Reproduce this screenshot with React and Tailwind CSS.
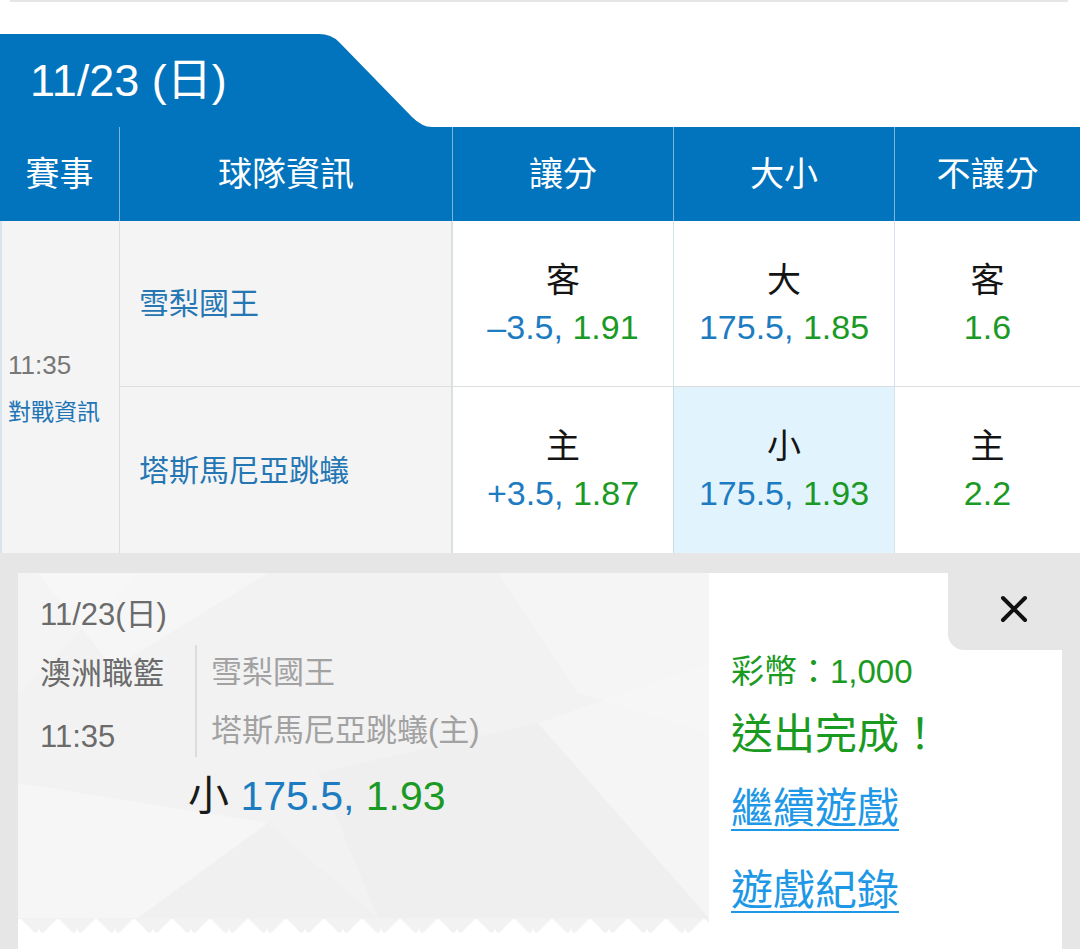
import React from 'react'

const rows = [
  {
    team: '雪梨國王',
    spread: { label: '客', line: '–3.5', odds: '1.91' },
    total: { label: '大', line: '175.5', odds: '1.85' },
    money: { label: '客', odds: '1.6' },
  },
  {
    team: '塔斯馬尼亞跳蟻',
    spread: { label: '主', line: '+3.5', odds: '1.87' },
    total: { label: '小', line: '175.5', odds: '1.93', active: true },
    money: { label: '主', odds: '2.2' },
  },
]

function OddsCell({ label, line, odds, active, last }) {
  return (
    <div
      className={`flex flex-col items-center justify-center border-l ${
        last ? 'w-[186px]' : 'w-[221px]'
      } ${active ? 'bg-[#e1f3fd] border-[#c9d9e6]' : 'bg-white border-[#d6e2ec]'}`}
    >
      <div className="text-[34px] leading-[47px] text-[#141414]">{label}</div>
      <div className="text-[34px] leading-[47px]">
        {line && <span className="text-[#1d7cc1]">{line}, </span>}
        <span className="text-[#1a9a25]">{odds}</span>
      </div>
    </div>
  )
}

function Ticket() {
  return (
    <div className="w-[691px] flex flex-col">
      <div className="relative h-[345px] bg-[#f2f2f2] overflow-hidden">
        {/* faint polygon backdrop */}
        <svg className="absolute inset-0" width="691" height="345" viewBox="0 0 691 345">
          <polygon points="20,0 250,0 95,95" fill="#ffffff" opacity="0.35" />
          <polygon points="0,120 120,0 0,0" fill="#ffffff" opacity="0.2" />
          <polygon points="480,0 691,0 691,160 560,120" fill="#ffffff" opacity="0.25" />
          <polygon points="300,200 520,150 691,345 360,345" fill="#ececec" opacity="0.35" />
          <polygon points="0,210 250,250 120,345 0,345" fill="#ffffff" opacity="0.3" />
          <polygon points="250,250 360,345 120,345" fill="#eeeeee" opacity="0.35" />
          <polygon points="520,150 691,90 691,345" fill="#f7f7f7" opacity="0.5" />
        </svg>
        <div className="relative pl-[22px] pt-[22px]">
          <div className="text-[31px] leading-[40px] text-[#6b6b6b]">11/23(日)</div>
          <div className="flex mt-[10px]">
            <div className="w-[155px] text-[31px] leading-[40px] text-[#6b6b6b]">
              <div className="mt-[9px]">澳洲職籃</div>
              <div className="mt-[23px]">11:35</div>
            </div>
            <div className="w-[2px] h-[112px] bg-[#dcdcdc]" />
            <div className="pl-[14px] text-[31px] leading-[40px] text-[#a2a2a2]">
              <div className="mt-[8px]">雪梨國王</div>
              <div className="mt-[18px]">塔斯馬尼亞跳蟻(主)</div>
            </div>
          </div>
          <div className="mt-[14px] ml-[148px] text-[41px] leading-[50px]">
            <span className="text-[#1a1a1a]">小 </span>
            <span className="text-[#1d7cc1]">175.5, </span>
            <span className="text-[#1a9a25]">1.93</span>
          </div>
        </div>
      </div>
      <svg width="691" height="16" viewBox="0 0 691 16">
        <defs>
          <pattern id="zig" x="-17" y="0" width="38" height="16" patternUnits="userSpaceOnUse">
            <path
              d="M0,0 H38 V10 C37,16 33,16 31,12 L21,2 C20,0.5 18,0.5 17,2 L7,12 C5,16 1,16 0,10 Z"
              fill="#f2f2f2"
            />
          </pattern>
        </defs>
        <rect width="691" height="16" fill="url(#zig)" />
      </svg>
    </div>
  )
}

export default function App() {
  return (
    <div className="w-[1080px] h-[949px] bg-white overflow-hidden font-['Liberation_Sans','Noto_Sans_CJK_TC',sans-serif]">
      <div className="ml-[10px] mr-[12px] h-[2px] bg-[#e6e6e6]" />

      {/* date tab */}
      <div className="flex mt-[32px] h-[93px]">
        <div className="w-[300px] bg-[#0274bd] text-white text-[45px] pl-[30px] flex items-center">
          11/23 (日)
        </div>
        <svg width="132" height="93" viewBox="0 0 132 93">
          <path d="M0,0 L19,0 Q31,0 39,8 L112,83 Q122,93 132,93 L0,93 Z" fill="#0274bd" />
        </svg>
      </div>

      {/* header */}
      <div className="flex h-[94px] bg-[#0274bd] text-white text-[34px]">
        <div className="w-[119px] flex items-center justify-center">賽事</div>
        <div className="w-[333px] flex items-center justify-center border-l border-[#7fb2da]">球隊資訊</div>
        <div className="w-[221px] flex items-center justify-center border-l border-[#7fb2da]">讓分</div>
        <div className="w-[221px] flex items-center justify-center border-l border-[#7fb2da]">大小</div>
        <div className="w-[186px] flex items-center justify-center border-l border-[#7fb2da]">不讓分</div>
      </div>

      {/* body */}
      <div className="flex h-[332px]">
        <div className="w-[119px] bg-[#f4f4f4] border-l-2 border-[#d8e4ee] flex flex-col justify-center pl-[6px]">
          <div className="text-[26px] leading-[34px] text-[#777777]">11:35</div>
          <div className="mt-[16px] text-[23px] leading-[28px] text-[#2174b5]">對戰資訊</div>
        </div>
        <div className="flex-1 flex flex-col">
          {rows.map((r, i) => (
            <div
              key={r.team}
              className={`flex h-[166px] ${i === 0 ? 'border-b border-[#dddddd]' : ''}`}
            >
              <div className="w-[333px] bg-[#f4f4f4] border-l border-r border-[#dddddd] flex items-center pl-[19px] text-[30px] text-[#2577b4]">
                {r.team}
              </div>
              <OddsCell {...r.spread} />
              <OddsCell {...r.total} />
              <OddsCell {...r.money} last />
            </div>
          ))}
        </div>
      </div>

      {/* confirmation panel */}
      <div className="h-[396px] bg-[#e6e6e6] px-[18px] pt-[20px]">
        <div className="flex h-full bg-white">
          <Ticket />
          <div className="relative flex-1 pl-[22px] pt-[78px]">
            <div className="absolute top-0 right-0 w-[114px] h-[77px] bg-[#e6e6e6] rounded-bl-[16px]">
              <svg className="absolute left-[52px] top-[22px]" width="28" height="28" viewBox="0 0 28 28">
                <path d="M3,3 L25,25 M25,3 L3,25" stroke="#111111" strokeWidth="4" strokeLinecap="round" />
              </svg>
            </div>
            <div className="text-[33px] leading-[42px] text-[#1a9a1f]">彩幣：1,000</div>
            <div className="mt-[17px] text-[42px] leading-[50px] text-[#1a9a1f]">送出完成！</div>
            <div className="mt-[24px] text-[42px] leading-[50px] text-[#1e98e6] underline decoration-2 underline-offset-[6px]">
              繼續遊戲
            </div>
            <div className="mt-[32px] text-[42px] leading-[50px] text-[#1e98e6] underline decoration-2 underline-offset-[6px]">
              遊戲紀錄
            </div>
          </div>
        </div>
      </div>
    </div>
  )
}
